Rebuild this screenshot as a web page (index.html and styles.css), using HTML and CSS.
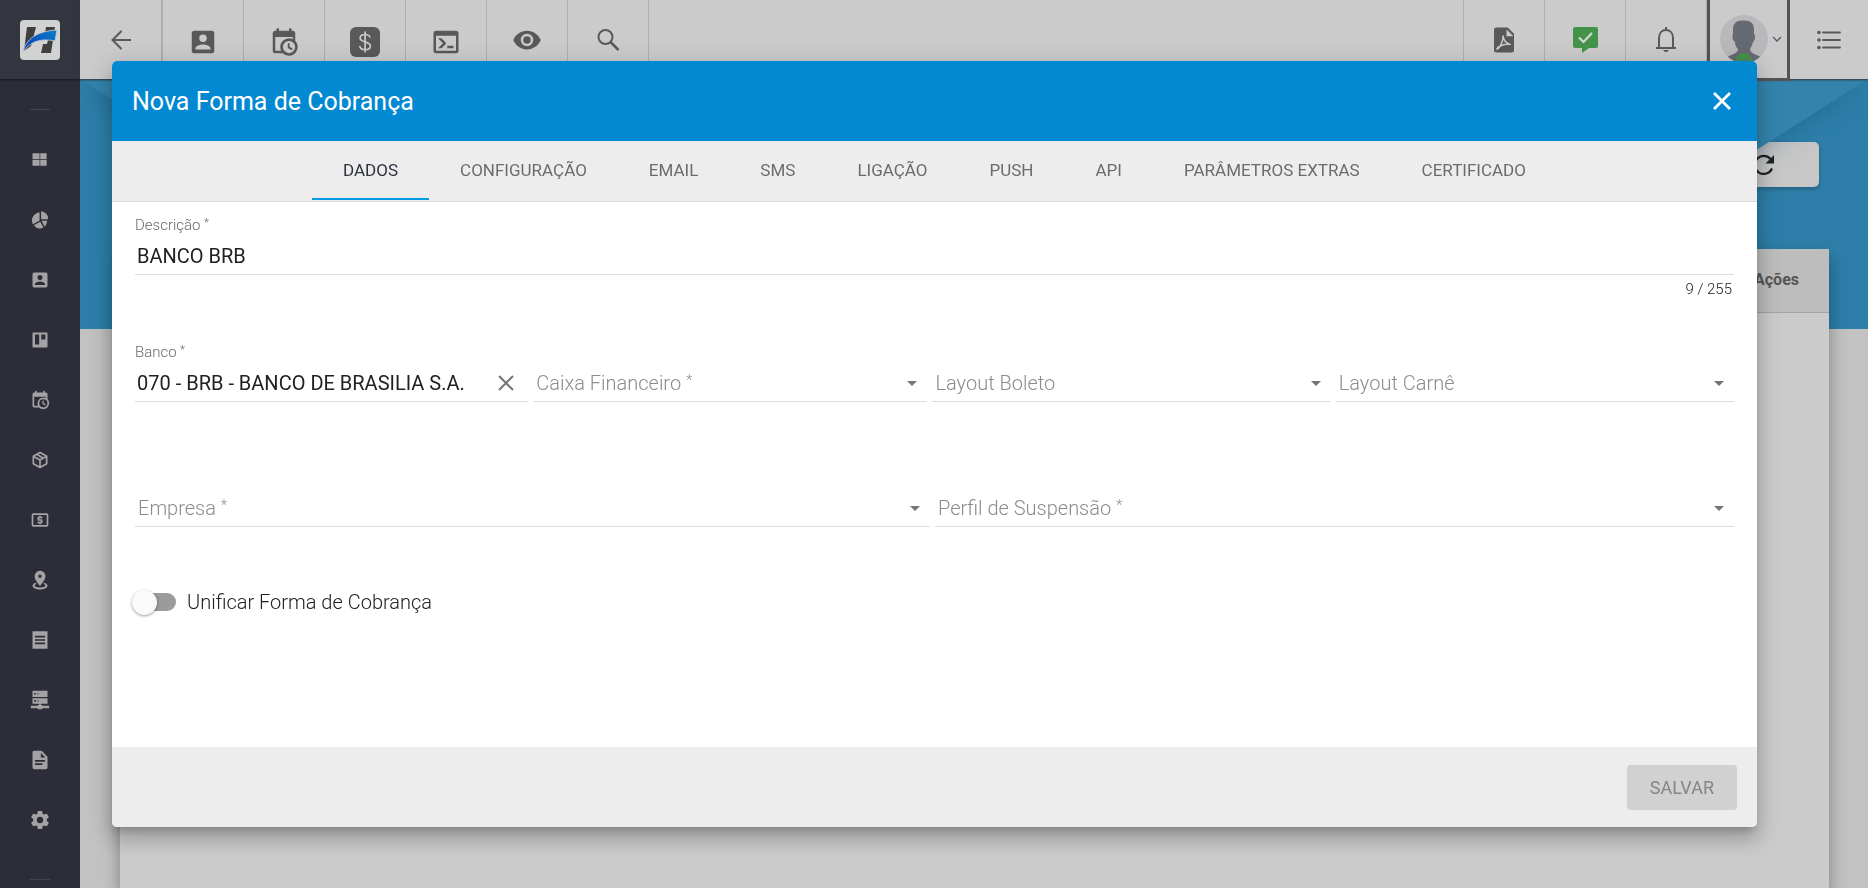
FILE: index.html
```html
<!DOCTYPE html>
<html lang="pt-BR">
<head>
<meta charset="utf-8">
<title>Nova Forma de Cobrança</title>
<link rel="stylesheet" href="styles.css">
</head>
<body>
<div class="app">
  <aside class="sidebar">
    <a class="brand" href="#" aria-label="Início">
      <svg viewBox="0 0 40 40" width="40" height="40"><defs><linearGradient id="sw" x1="0" y1="1" x2="1" y2="0"><stop offset="0" stop-color="#0a35c4"/><stop offset="1" stop-color="#0b82c4"/></linearGradient></defs><rect width="40" height="40" rx="4" fill="#d2d2d2"/><path d="M7 7h9l-5 19-7 5zM26 7h9l-4 26H21l2-9h4l1-4h-4z" fill="#3f3f3f"/><path d="M3 32C6 19 17 11 37 10l-2 11C22 18 10 21 3 32z" fill="url(#sw)" stroke="#d2d2d2" stroke-width=".8"/></svg>
    </a>
    <hr class="divider">
    <nav class="menu">
      <a href="#" aria-label="Painel"><svg viewBox="0 0 24 24"><path d="M3 4h8.500v7.200H3zM12.300 4H20v7.200h-7.700zM3 12h8.500v7H3zM12.300 12H20v7h-7.700z"/></svg></a>
      <a href="#" aria-label="Gráficos"><svg viewBox="0 0 24 24"><path d="M13.300 1.500A9.500 9.500 0 0 1 22 11h-8.700zM11.500 3v9.500L3.500 17A9.500 9.500 0 0 1 11.500 3zM12.300 14l3.800 7A9.500 9.500 0 0 1 4.500 18.300zM14 13h6.500a9 9 0 0 1-3 7z"/></svg></a>
      <a href="#" aria-label="Clientes"><svg viewBox="0 0 24 24"><path d="M6 17c0-2 4-3.100 6-3.100s6 1.100 6 3.100v1H6m9-9a3 3 0 0 1-6 0 3 3 0 0 1 6 0M3 5v14a2 2 0 0 0 2 2h14a2 2 0 0 0 2-2V5a2 2 0 0 0-2-2H5a2 2 0 0 0-2 2z" fill-rule="evenodd"/></svg></a>
      <a href="#" aria-label="Quadros"><svg viewBox="0 0 24 24"><path fill-rule="evenodd" d="M4 3h16a1 1 0 0 1 1 1v16a1 1 0 0 1-1 1H4a1 1 0 0 1-1-1V4a1 1 0 0 1 1-1zm2 2.500v12h5v-12zm7.500 0v6h5v-6z"/></svg></a>
      <a href="#" aria-label="Agenda"><svg viewBox="0 0 24 24"><path d="M15 13h1.500v2.800l2.400 1.400-.7 1.300-3.200-1.800V13m4-5H5v11h4.700c-.5-.9-.7-1.900-.7-3a7 7 0 0 1 7-7c1.100 0 2.100.2 3 .7V8M5 21a2 2 0 0 1-2-2V5c0-1.100.9-2 2-2h1V1h2v2h8V1h2v2h1a2 2 0 0 1 2 2v6.100c1.200 1.200 2 3 2 4.900a7 7 0 0 1-7 7c-1.900 0-3.700-.8-4.900-2H5m11-9.900A4.900 4.900 0 0 0 11.100 16 4.900 4.900 0 0 0 16 20.900 4.900 4.900 0 0 0 20.900 16 4.900 4.900 0 0 0 16 11.100z"/></svg></a>
      <a href="#" aria-label="Produtos"><svg viewBox="0 0 24 24"><path d="M21 16.500c0 .4-.2.700-.5.900l-7.900 4.400c-.2.200-.4.200-.6.200s-.4 0-.6-.2l-7.900-4.400a1 1 0 0 1-.5-.9v-9c0-.4.200-.7.500-.9l7.900-4.400c.2-.2.400-.2.600-.2s.4 0 .6.200l7.900 4.400c.3.200.5.500.5.900v9M12 4.200l-1.900 1L16 8.600l2-1.100-6-3.300M6 7.500l6 3.400 2-1.100-5.900-3.500L6 7.500M5 15.900l6 3.400v-6.700L5 9.200v6.700m14 0V9.200l-6 3.400v6.700l6-3.400z"/></svg></a>
      <a href="#" aria-label="Financeiro"><svg viewBox="0 0 24 24"><path d="M20 18H4V6h16m0-2H4a2 2 0 0 0-2 2v12a2 2 0 0 0 2 2h16a2 2 0 0 0 2-2V6a2 2 0 0 0-2-2m-9 13h2v-1h1a1 1 0 0 0 1-1v-3a1 1 0 0 0-1-1h-3v-1h4V8h-2V7h-2v1h-1a1 1 0 0 0-1 1v3a1 1 0 0 0 1 1h3v1H9v2h2v1z"/></svg></a>
      <a href="#" aria-label="Mapa"><svg viewBox="0 0 24 24"><path d="M12 1c3.600 0 6.500 2.900 6.500 6.500C18.500 12.400 12 19 12 19S5.500 12.400 5.500 7.500A6.500 6.500 0 0 1 12 1m0 4.500a2 2 0 1 0 0 4 2 2 0 0 0 0-4m9 13.500c0 2.500-4 4.500-9 4.500s-9-2-9-4.500c0-1.600 1.500-2.900 3.700-3.700l1.200 1.600c-1.400.4-2.400 1-2.400 1.700C5.500 20 8.400 21 12 21s6.500-1 6.500-2.400c0-.7-1-1.300-2.400-1.700l1.200-1.600C19.500 16.100 21 17.400 21 19z"/></svg></a>
      <a href="#" aria-label="Faturas"><svg viewBox="0 0 24 24"><path fill-rule="evenodd" d="M3 1l1.500 1L6 1l1.500 1L9 1l1.500 1L12 1l1.500 1L15 1l1.500 1L18 1l1.500 1L21 1v22l-1.500-1-1.500 1-1.500-1-1.500 1-1.500-1-1.500 1-1.500-1L9 23l-1.500-1L6 23l-1.500-1L3 23zM6 7v2h12V7zm0 4v2h12v-2zm0 4v2h12v-2z"/></svg></a>
      <a href="#" aria-label="Servidores"><svg viewBox="0 0 24 24"><path fill-rule="evenodd" d="M3 1h18v7.500H3zm2 2.500v2h2v-2zm4 0v2h1v-2zM3 10h18v6.500h-8V18h1a1 1 0 0 1 1 1h8v3h-8a1 1 0 0 1-1 1h-4a1 1 0 0 1-1-1H1v-3h8a1 1 0 0 1 1-1h1v-1.500H3zm2 2v2h2v-2zm4 0v2h1v-2z"/></svg></a>
      <a href="#" aria-label="Relatórios"><svg viewBox="0 0 24 24"><path d="M13 9h5.500L13 3.500V9M6 1h8l7 7v13a2 2 0 0 1-2 2H5a2 2 0 0 1-2-2V3c0-1.100.9-2 2-2m10 17v-2H6v2h9m3-4v-2H6v2h12z"/></svg></a>
      <a href="#" aria-label="Configurações"><svg viewBox="1 1 22 22"><path d="M12 15.500A3.500 3.500 0 0 1 8.500 12 3.500 3.500 0 0 1 12 8.500a3.500 3.500 0 0 1 3.500 3.500 3.500 3.500 0 0 1-3.500 3.500m7.430-2.530c.04-.32.070-.64.070-.97s-.03-.66-.07-1l2.110-1.630c.19-.15.24-.42.120-.64l-2-3.460c-.12-.22-.39-.31-.61-.22l-2.490 1c-.52-.39-1.060-.73-1.690-.98l-.37-2.650A.506.506 0 0 0 14 2h-4c-.25 0-.46.180-.5.420l-.37 2.650c-.63.250-1.170.590-1.690.980l-2.490-1c-.22-.09-.49 0-.61.220l-2 3.460c-.13.220-.07.490.120.640L4.570 11c-.04.340-.07.670-.07 1s.030.650.070.970l-2.110 1.660c-.19.150-.25.420-.12.640l2 3.460c.120.220.390.300.610.220l2.490-1.010c.520.400 1.060.740 1.690.990l.370 2.650c.040.240.250.420.500.420h4c.250 0 .460-.18.500-.42l.370-2.650c.630-.26 1.170-.59 1.690-.99l2.490 1.010c.220.080.490 0 .610-.22l2-3.460c.120-.22.070-.49-.12-.64l-2.110-1.660z"/></svg></a>
    </nav>
    <hr class="divider">
  </aside>

  <div class="workspace">
    <header class="topbar">
      <button class="tool" aria-label="Voltar"><svg viewBox="0 0 24 24" width="24" height="24"><path d="M22 12H3M12.500 3l-9 9 9 9" fill="none" stroke="currentColor" stroke-width="2"/></svg></button>
      <button class="tool tool-low" aria-label="Clientes"><svg viewBox="0 0 24 24" width="30" height="30"><path d="M6 17c0-2 4-3.100 6-3.100s6 1.100 6 3.100v1H6m9-9a3 3 0 0 1-6 0 3 3 0 0 1 6 0M3 5v14a2 2 0 0 0 2 2h14a2 2 0 0 0 2-2V5a2 2 0 0 0-2-2H5a2 2 0 0 0-2 2z" fill-rule="evenodd"/></svg></button>
      <button class="tool tool-low" aria-label="Agenda"><svg viewBox="0 0 24 24" width="30" height="30"><path d="M15 13h1.500v2.800l2.400 1.400-.7 1.300-3.200-1.800V13m4-5H5v11h4.700c-.5-.9-.7-1.900-.7-3a7 7 0 0 1 7-7c1.100 0 2.100.2 3 .7V8M5 21a2 2 0 0 1-2-2V5c0-1.100.9-2 2-2h1V1h2v2h8V1h2v2h1a2 2 0 0 1 2 2v6.100c1.200 1.200 2 3 2 4.900a7 7 0 0 1-7 7c-1.900 0-3.700-.8-4.900-2H5m11-9.900A4.900 4.900 0 0 0 11.100 16 4.900 4.900 0 0 0 16 20.900 4.900 4.900 0 0 0 20.900 16 4.900 4.900 0 0 0 16 11.100z"/></svg></button>
      <button class="tool tool-low" aria-label="Financeiro"><svg viewBox="0 0 30 30" width="30" height="30"><rect width="30" height="30" rx="6"/><path d="M20 10.500C19.500 8.600 17.700 7.500 15 7.500c-3 0-4.900 1.400-4.900 3.600 0 5.200 10.300 2.500 10.300 7.900 0 2.300-2.200 3.700-5.200 3.700-3.200 0-5.200-1.500-5.500-3.900M15.100 4.500v21" fill="none" stroke="#cbcbcb" stroke-width="1.700"/></svg></button>
      <button class="tool tool-low" aria-label="Terminal"><svg viewBox="0 0 24 24" width="30" height="30"><path d="M20 19V7H4v12h16m0-16a2 2 0 0 1 2 2v14a2 2 0 0 1-2 2H4a2 2 0 0 1-2-2V5a2 2 0 0 1 2-2h16m-7 14v-2h5v2h-5m-3.400-4L5.600 9h2.800l3.300 3.300c.4.400.4 1 0 1.400L8.400 17H5.600l4-4z"/></svg></button>
      <button class="tool" aria-label="Visualizar"><svg viewBox="0 0 24 24" width="30" height="30"><path d="M12 9a3 3 0 0 0-3 3 3 3 0 0 0 3 3 3 3 0 0 0 3-3 3 3 0 0 0-3-3m0 8a5 5 0 0 1-5-5 5 5 0 0 1 5-5 5 5 0 0 1 5 5 5 5 0 0 1-5 5m0-12.500C7 4.500 2.730 7.610 1 12c1.730 4.390 6 7.500 11 7.500s9.270-3.110 11-7.500c-1.730-4.390-6-7.500-11-7.500z"/></svg></button>
      <button class="tool" aria-label="Buscar"><svg viewBox="0 0 24 24" width="24" height="24"><circle cx="9.500" cy="9" r="7" fill="none" stroke="currentColor" stroke-width="2"/><path d="M14.500 14l8 8" fill="none" stroke="currentColor" stroke-width="2.500"/></svg></button>
      <span class="spacer"></span>
      <button class="tool" aria-label="PDF"><svg viewBox="0 0 24 24" width="30" height="30"><path d="M14 9h5.500L14 3.500V9M6 2h9l5 5v13a2 2 0 0 1-2 2H6a2 2 0 0 1-2-2V4a2 2 0 0 1 2-2z" fill-rule="evenodd"/><path d="M6 19.500c1-2.500 5.500-4.500 11.500-4M6 19.500c2.500-.5 5.500-6.500 5.300-11M11.200 8.500c.5 4 2.800 6.500 6.300 7.200" fill="none" stroke="#cbcbcb" stroke-width="1.200"/></svg></button>
      <button class="tool tool-ok" aria-label="Mensagens"><svg viewBox="0 0 25 26" width="25" height="26"><path d="M2 0h21a2 2 0 0 1 2 2v17a2 2 0 0 1-2 2h-7l-7 5v-5H2a2 2 0 0 1-2-2V2a2 2 0 0 1 2-2z"/><path d="M6 10.500l4.500 4.500L19 6" fill="none" stroke="#d6d6d6" stroke-width="2.200"/></svg></button>
      <button class="tool" aria-label="Notificações"><svg viewBox="0 0 22 25" width="22" height="25"><path d="M1 21h20M4 20V11c0-5 3-8 7-8s7 3 7 8v9M11 0v3" fill="none" stroke="currentColor" stroke-width="2"/><path d="M8 23h6l-2 2h-2z"/></svg></button>
      <button class="tool tool-user" aria-label="Usuário"><svg viewBox="0 0 48 48" width="48" height="48"><defs><clipPath id="av"><circle cx="24" cy="24" r="24"/></clipPath></defs><circle cx="24" cy="24" r="24" fill="#b9b9bd"/><g clip-path="url(#av)"><path d="M13 14c0-6 4-9 10-8.500C30 5 34 8 34 14v5c2 1 1 7-1 8-1 4-2 5-3 7 0 4 5 5 11 8v8H7v-8c6-3 11-4 11-8-2-2-3-4-3-7-3-1-3-7-2-8z" fill="#666a73"/><circle cx="24" cy="46" r="8" fill="#43944a"/><path d="M20 45l3 3 6-6" fill="none" stroke="#666a73" stroke-width="1.500"/></g></svg><svg viewBox="0 0 10 6" width="10" height="6"><path d="M1 1l4 4 4-4" fill="none" stroke="currentColor" stroke-width="1.300"/></svg></button>
      <button class="tool" aria-label="Lista"><svg viewBox="0 0 24 20" width="24" height="20"><path d="M6 2.500h17M6 10h17M6 17.500h17" stroke="currentColor" stroke-width="1.800" stroke-linecap="round"/><circle cx="2" cy="2.500" r="1.800"/><circle cx="2" cy="10" r="1.800"/><circle cx="2" cy="17.500" r="1.800"/></svg></button>
    </header>
    <main class="page">
      <div class="hero"><div class="hero-shape"></div></div>
      <div class="content">
        <div class="actions"><button class="refresh" aria-label="Atualizar"><svg viewBox="0 0 24 24" width="24" height="24"><path d="M20 15.500A9 9 0 1 1 18.500 6" fill="none" stroke="#202020" stroke-width="2.200"/><path d="M22 2v8.500h-8.500z" fill="#202020"/></svg></button></div>
        <div class="card"><table class="grid"><thead><tr><th scope="col">Ações</th></tr></thead></table></div>
      </div>
    </main>
  </div>
</div>

<div class="overlay">
  <form class="dialog" role="dialog" aria-labelledby="title">
    <header class="dialog-head">
      <h1 id="title">Nova Forma de Cobrança</h1>
      <button type="button" class="close" aria-label="Fechar"><svg viewBox="0 0 18 18" width="18" height="18"><path d="M1 1l16 16M17 1L1 17" stroke="#fff" stroke-width="2.800"/></svg></button>
    </header>
    <nav class="tabs" role="tablist">
      <button type="button" role="tab" aria-selected="true">DADOS</button>
      <button type="button" role="tab">CONFIGURAÇÃO</button>
      <button type="button" role="tab">EMAIL</button>
      <button type="button" role="tab">SMS</button>
      <button type="button" role="tab">LIGAÇÃO</button>
      <button type="button" role="tab">PUSH</button>
      <button type="button" role="tab">API</button>
      <button type="button" role="tab">PARÂMETROS EXTRAS</button>
      <button type="button" role="tab">CERTIFICADO</button>
    </nav>
    <div class="dialog-body">
      <div class="row">
        <div class="field filled">
          <label for="descricao">Descrição <sup>*</sup></label>
          <input id="descricao" type="text" value="BANCO BRB" maxlength="255">
        </div>
        <div class="counter">9 / 255</div>
      </div>
      <div class="row row-four">
        <div class="field filled">
          <label for="banco">Banco <sup>*</sup></label>
          <input id="banco" type="text" value="070 - BRB - BANCO DE BRASILIA S.A.">
          <button type="button" class="clear" aria-label="Limpar"><svg viewBox="0 0 16 16" width="16" height="16"><path d="M1 1l14 14M15 1L1 15" stroke="#757575" stroke-width="2"/></svg></button>
        </div>
        <div class="field"><label for="caixa">Caixa Financeiro <sup>*</sup></label><select id="caixa"><option></option></select><svg class="arrow" viewBox="0 0 10 5"><path d="M0 0h10L5 5z"/></svg></div>
        <div class="field"><label for="boleto">Layout Boleto</label><select id="boleto"><option></option></select><svg class="arrow" viewBox="0 0 10 5"><path d="M0 0h10L5 5z"/></svg></div>
        <div class="field"><label for="carne">Layout Carnê</label><select id="carne"><option></option></select><svg class="arrow" viewBox="0 0 10 5"><path d="M0 0h10L5 5z"/></svg></div>
      </div>
      <div class="row row-two">
        <div class="field"><label for="empresa">Empresa <sup>*</sup></label><select id="empresa"><option></option></select><svg class="arrow" viewBox="0 0 10 5"><path d="M0 0h10L5 5z"/></svg></div>
        <div class="field"><label for="perfil">Perfil de Suspensão <sup>*</sup></label><select id="perfil"><option></option></select><svg class="arrow" viewBox="0 0 10 5"><path d="M0 0h10L5 5z"/></svg></div>
      </div>
      <label class="switch"><input type="checkbox" role="switch">Unificar Forma de Cobrança</label>
    </div>
    <footer class="dialog-foot"><button type="submit" class="save" disabled>SALVAR</button></footer>
  </form>
</div>
</body>
</html>
```
FILE: styles.css
```css
* { box-sizing: border-box; }
body { margin: 0; font-family: Roboto, sans-serif; font-size: 20px; color: #212121; overflow: hidden; }
button, input, select { font: inherit; color: inherit; border: 0; background: none; padding: 0; margin: 0; border-radius: 0; outline: 0; }
svg { display: block; fill: currentColor; flex: none; }

.app { display: flex; height: 100vh; overflow: hidden; background: #c2c2c2; }
.sidebar { width: 80px; flex: none; background: #2c2d38; overflow: hidden; }
.brand { display: grid; place-items: center; height: 79px; background: #34363f; box-shadow: 0 1px 2px #15161c; }
.divider { border: 0; height: 1px; background: #42434c; margin: 30px 30px 20px; }
.menu + .divider { margin-top: 29px; }
.menu a { display: grid; place-items: center; height: 60px; color: #a3a3a5; }
.menu svg { width: 20px; height: 20px; }

.workspace { flex: 1; min-width: 0; display: flex; flex-direction: column; }
.topbar { display: flex; height: 79px; flex: none; background: #cbcbcb; box-shadow: 0 1px 2px #333; z-index: 1; }
.tool { width: 81px; flex: none; display: flex; align-items: center; justify-content: center; gap: 4px; color: #595959; border-right: 1px solid #aeaeae; }
.tool:first-child { width: 83px; border-right-width: 2px; }
.tool-low { padding-top: 4px; }
.tool:last-child { width: 78px; border-right: 0; }
.spacer { flex: 1; border-right: 1px solid #aeaeae; }
.tool-ok { color: #43944a; }
.tool-user { width: 83px; margin-bottom: -2px; padding-left: 4px; border: 3px solid #545454; border-top: 0; }

.page { flex: 1; display: grid; min-height: 0; }
.hero, .content { grid-area: 1 / 1; min-width: 0; }
.hero { height: 250px; background: #2d7fa9; overflow: hidden; }
.hero-shape { height: 100%; filter: drop-shadow(0 4px 12px rgba(0, 60, 95, .25)); }
.hero-shape::before { content: ""; display: block; height: 100%; background: #3384ac; clip-path: polygon(0 0, 100% 0, 78% 100%, 22% 100%); }
.content { display: flex; flex-direction: column; padding: 63px 39px 0 40px; }
.actions { display: flex; justify-content: flex-end; padding-right: 10px; }
.refresh { display: flex; align-items: center; justify-content: flex-end; width: 240px; height: 45px; padding-right: 43px; border-radius: 5px; background: #c7c7c7; box-shadow: 0 2px 5px rgba(0, 0, 0, .25); }
.card { flex: 1; margin-top: 62px; background: #cbcbcb; box-shadow: 0 8px 16px rgba(0, 0, 0, .35); }
.grid { width: 100%; border-collapse: collapse; }
.grid th { height: 63px; padding: 0 30px 2px; background: #bdbdbd; border-bottom: 1px solid #a3a3a3; color: #555; font-size: 16px; font-weight: 700; text-align: right; }

.overlay { position: fixed; inset: 0; display: flex; align-items: center; padding: 0 111px 0 112px; z-index: 2; }
.dialog { display: flex; flex-direction: column; flex: 1; min-height: calc(100vh - 122px); border-radius: 5px; background: #fff; box-shadow: 0 7px 8px -4px rgba(0, 0, 0, .2), 0 13px 19px 2px rgba(0, 0, 0, .14), 0 5px 24px 4px rgba(0, 0, 0, .12); overflow: hidden; }
.dialog-head { display: flex; align-items: center; justify-content: space-between; height: 80px; padding: 0 26px 0 20px; background: #0388d2; color: #fff; }
.dialog-head h1 { margin: 0; font-size: 25px; font-weight: 400; }
.tabs { display: flex; align-items: flex-start; justify-content: center; height: 61px; background: #ededed; border-bottom: 1px solid #dadada; }
.tabs button { height: 59px; padding: 0 31px; font-size: 17px; color: #6c6c6c; border-bottom: 2px solid transparent; }
.tabs button[aria-selected] { color: #2d323e; border-bottom-color: #039be5; }

.dialog-body { flex: 1; padding: 13px 23px 24px; font-weight: 300; }
.row + .row { margin-top: 44px; }
.row-four, .row-two { display: grid; column-gap: 5px; }
.row-four { grid-template-columns: 393fr 394fr 398fr 398fr; }
.row-two { grid-template-columns: 795fr 799fr; }
.row-four + .row-two { margin-top: 65px; }
.field { display: grid; grid-template: 24px 34px / 1fr auto; padding-bottom: 1px; border-bottom: 1px solid #dedede; }
.field label { grid-area: 2 / 1; align-self: center; padding-left: 3px; line-height: 24px; color: #8c8c8c; pointer-events: none; }
.field sup { font-size: 15px; line-height: 0; vertical-align: 5px; }
.field.filled label { grid-area: 1 / 1; align-self: start; padding-left: 0; font-size: 15px; line-height: 20px; color: #6a6a6a; }
.field.filled sup { font-size: 11px; vertical-align: 4px; }
.field input { grid-area: 2 / 1; min-width: 0; padding-left: 2px; font-weight: 400; }
.field select { grid-area: 2 / 1 / 3 / 3; appearance: none; width: 100%; }
.arrow { grid-area: 2 / 2; align-self: center; width: 10px; height: 5px; margin-right: 10px; color: #757575; pointer-events: none; }
.clear { grid-area: 2 / 2; display: grid; place-items: center; width: 44px; }
.counter { margin-top: 5px; padding-right: 2px; font-size: 15px; line-height: 18px; text-align: right; color: #212121; }
.switch { display: inline-flex; align-items: center; gap: 11px; margin-top: 62px; line-height: 26px; }
.switch input { appearance: none; display: flex; align-items: center; width: 41px; height: 18px; border-radius: 9px; background: #9b9b9b; }
.switch input::before { content: ""; width: 25px; height: 25px; flex: none; margin-left: -3px; border-radius: 50%; background: #fafafa; box-shadow: 0 1px 3px rgba(0, 0, 0, .4); }
.dialog-foot { display: flex; align-items: center; justify-content: flex-end; height: 80px; padding: 0 20px; background: #ededed; }
.save { height: 45px; padding: 0 23px; border-radius: 4px; background: #d1d1d1; color: #858585; font-size: 18px; }
```
